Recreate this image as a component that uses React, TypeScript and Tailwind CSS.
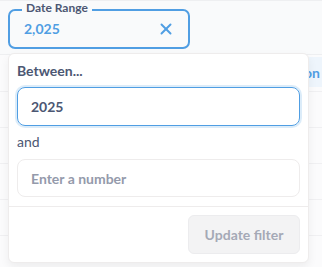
import { X } from 'lucide-react'

export default function App() {
  const rows = [0, 1, 2, 3, 4]

  return (
    <div
      className="relative w-[322px] h-[267px] overflow-hidden bg-[#fbfbfc]"
      style={{ fontFamily: 'Lato, "Open Sans", sans-serif' }}
    >
      {/* Filter bar */}
      <div className="h-[55px] bg-[#f9fafb] border-t border-b border-[#eeeff1] pt-2 pl-2">
        <div className="relative w-[182px] h-[40px] border-2 border-[#509ee3] rounded-[7px] flex items-center pl-[14px] pr-[13px]">
          <span className="absolute -top-[10px] left-[12px] px-1 bg-[#f9fafb] text-[12px] leading-[14px] font-bold text-[#4c5773]">
            Date Range
          </span>
          <span className="flex-1 text-[14px] leading-[20px] font-bold text-[#509ee3]">2,025</span>
          <X size={18} strokeWidth={2.6} className="text-[#509ee3]" />
        </div>
      </div>

      {/* Table rows behind */}
      <div className="flex flex-col">
        <div className="h-[37px] border-b border-[#f0f0f2] flex justify-end items-start">
          <div className="mt-[2px] h-[30px] w-[24px] bg-[#eef5fc] flex items-center text-[14px] font-bold text-[#509ee3] pl-[6px]">
            on
          </div>
        </div>
        {rows.map((r) => (
          <div key={r} className="h-[36px] border-b border-[#f0f0f2]" />
        ))}
      </div>

      {/* Popover */}
      <div className="absolute left-2 top-[53px] w-[301px] h-[210px] bg-white border border-[#eeecec] rounded-md shadow-[0_4px_10px_rgba(0,0,0,0.06)] flex flex-col">
        <div className="px-2 pt-[7px] flex flex-col">
          <div className="text-[14px] leading-[20px] font-bold text-[#4c5773]">Between...</div>
          <div className="mt-[6px] h-[39px] rounded-lg border border-[#509ee3] shadow-[0_0_0_2px_rgba(80,158,227,0.2)] flex items-center px-[13px] text-[14px] font-bold text-[#4c5773]">
            2025
          </div>
          <div className="mt-[6px] text-[14px] leading-[20px] text-[#4c5773]">and</div>
          <div className="mt-[7px] h-[38px] rounded-lg border border-[#eeecec] flex items-center px-[13px] text-[14px] font-bold text-[#949aab]">
            Enter a number
          </div>
        </div>
        <div className="mt-[9px] border-t border-[#eeecec] flex justify-end p-2">
          <div className="h-[39px] w-[112px] rounded-md bg-[#f3f3f4] border border-[#ececee] flex items-center justify-center text-[14px] font-bold text-[#a5a9b6]">
            Update filter
          </div>
        </div>
      </div>
    </div>
  )
}
